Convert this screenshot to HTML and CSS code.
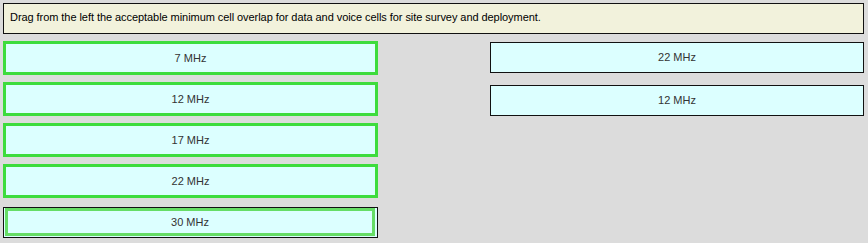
FILE: index.html
```html
<html>
<head>
    <title>Drag and Drop</title>
    <link rel="stylesheet" href="styles.css">
</head>
<body>
    <div class="question">Drag from the left the acceptable minimum cell overlap for data and voice cells for site survey and deployment.</div>
    <div class="board">
        <div class="column">
            <div class="slot"><div class="chip">7 MHz</div></div>
            <div class="slot"><div class="chip">12 MHz</div></div>
            <div class="slot"><div class="chip">17 MHz</div></div>
            <div class="slot"><div class="chip">22 MHz</div></div>
            <div class="slot"><div class="chip chip-faded">30 MHz</div></div>
        </div>
        <div class="column column-right">
            <div class="slot">22 MHz</div>
            <div class="slot">12 MHz</div>
        </div>
    </div>
</body>
</html>
```

FILE: styles.css
```css
body {
    font-family: "Liberation Sans", Arial, sans-serif;
    font-size: 11px;
    background-color: #dcdcdc;
    margin: 0;
    padding: 3px 4px 0 3px;
}
.question {
    height: 29px;
    line-height: 27px;
    background-color: #f2f2dc;
    border: 1px solid #111;
    padding-left: 6px;
    color: #000;
    letter-spacing: -0.06px;
}
.board {
    display: grid;
    grid-template-columns: 375px 374px;
    justify-content: space-between;
    margin-top: 8px;
}
.column {
    display: flex;
    flex-direction: column;
    gap: 10px;
    padding-top: 1px;
}
.column-right {
    padding-top: 0;
    gap: 12px;
}
.slot {
    position: relative;
    height: 29px;
    line-height: 29px;
    border: 1px solid #111;
    background-color: #dcffff;
    text-align: center;
    color: #333;
}
.chip {
    position: absolute;
    top: -3px;
    left: -1px;
    right: -1px;
    bottom: -2px;
    border: 3px solid #3ddc3d;
    background-color: #dcffff;
    display: flex;
    justify-content: center;
    align-items: center;
    color: #333;
}
.chip-faded {
    top: 0;
    left: 1px;
    right: 2px;
    bottom: 1px;
    border-color: #66dd66;
}
```
